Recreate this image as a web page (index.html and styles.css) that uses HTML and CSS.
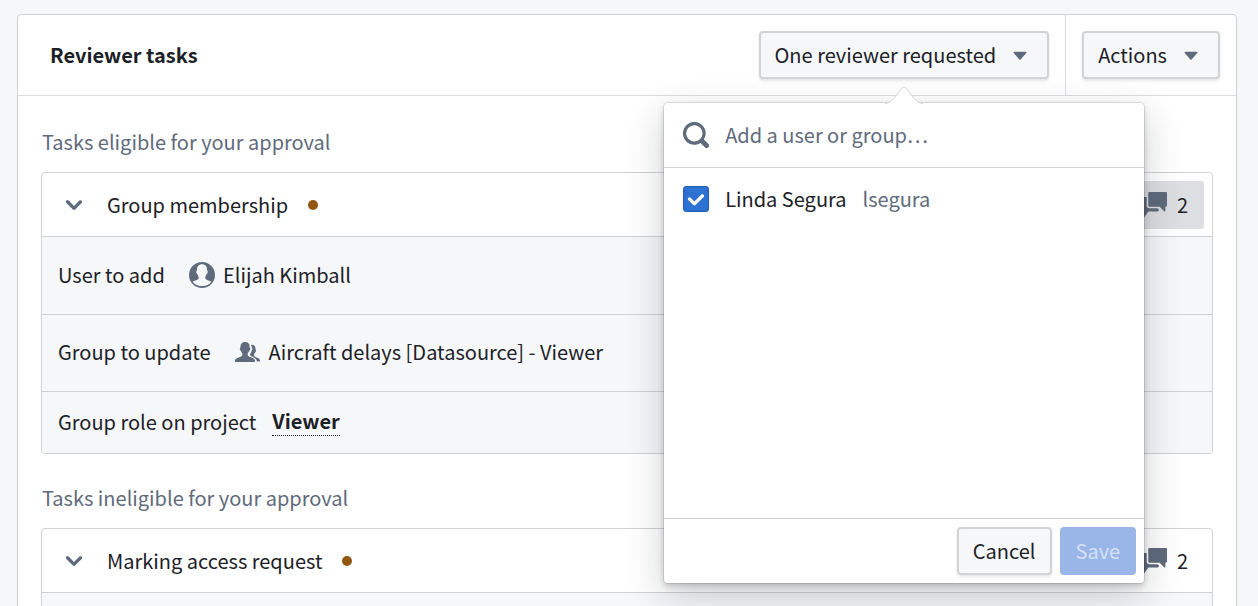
FILE: index.html
```html
<!DOCTYPE html>
<html lang="en">
<head>
<meta charset="utf-8">
<title>Reviewer tasks</title>
<link rel="stylesheet" href="styles.css">
</head>
<body>
<svg class="sprite" aria-hidden="true">
  <symbol id="chevron" viewBox="0 0 16 16"><path d="M12 5c-.28 0-.53.11-.71.29L8 8.59l-3.29-3.3a1.003 1.003 0 00-1.42 1.42l4 4c.18.18.43.29.71.29s.53-.11.71-.29l4-4A1.003 1.003 0 0012 5z"/></symbol>
  <symbol id="caret" viewBox="0 0 16 16"><path d="M12 6.500c0-.28-.22-.5-.5-.5h-7a.495.495 0 00-.37.83l3.500 4c.09.1.22.17.37.17s.28-.07.37-.17l3.500-4c.08-.09.13-.2.13-.33z"/></symbol>
  <symbol id="chat" viewBox="0 0 16 16"><path d="M5.200 0H15.300c.4 0 .7.3.7.7v7.600c0 .4-.3.7-.7.7H15v2.500c0 .5-.5.6-.8.300L11.500 9H5.200c-.4 0-.7-.3-.7-.7V.7c0-.4.3-.7.7-.7z"/><path d="M3.500 3v5.500C3.500 9.400 4.100 10 5 10h5.200l.8.800v.500c0 .4-.3.7-.7.7H4.500l-2.700 3.800c-.3.300-.8.200-.8-.300V12H.7c-.4 0-.7-.3-.7-.7V3.700C0 3.300.3 3 .7 3z"/></symbol>
</svg>
<main class="card">
  <header class="card-header">
    <h1 class="card-title">Reviewer tasks</h1>
    <div class="header-group reviewer-picker">
      <button class="button" type="button" aria-expanded="true">One reviewer requested <svg class="icon"><use href="#caret"/></svg></button>
      <section class="popover" aria-label="Reviewers">
        <svg class="popover-arrow" viewBox="0 0 38 18"><path class="arrow-fill" d="M0 18C5 17 8 14 11 10L16 3Q19 -1 22 3L27 10C30 14 33 17 38 18z"/><path class="arrow-line" d="M0 17.500C5 17 8 14 11 10L16 3Q19 -1 22 3L27 10C30 14 33 17 38 17.500"/></svg>
        <div class="search">
          <svg class="icon" viewBox="0 0 16 16"><path d="M15.550 13.430l-2.670-2.680a6.940 6.940 0 001.110-3.760c0-3.870-3.130-7-7-7s-7 3.130-7 7 3.130 7 7 7c1.390 0 2.680-.42 3.760-1.110l2.680 2.670a1.498 1.498 0 102.120-2.120zm-8.560-1.440c-2.760 0-5-2.240-5-5s2.240-5 5-5 5 2.240 5 5-2.240 5-5 5z"/></svg>
          <input class="search-input" type="text" placeholder="Add a user or group…" aria-label="Add a user or group">
        </div>
        <div class="options">
          <label class="option">
            <span class="check"><input class="check-input" type="checkbox" checked><svg class="check-tick" viewBox="0 0 16 16"><path d="M12 5c-.28 0-.53.11-.71.29L7 9.590l-2.290-2.300a1.003 1.003 0 00-1.420 1.420l3 3c.18.18.43.29.71.29s.53-.11.71-.29l5-5A1.003 1.003 0 0012 5z"/></svg></span>
            <span>Linda Segura</span>
            <span class="muted">lsegura</span>
          </label>
        </div>
        <footer class="popover-footer">
          <button class="button" type="button">Cancel</button>
          <button class="button primary" type="button" disabled>Save</button>
        </footer>
      </section>
    </div>
    <div class="header-group actions">
      <button class="button" type="button">Actions <svg class="icon"><use href="#caret"/></svg></button>
    </div>
  </header>
  <div class="card-body">
    <section class="task-group">
      <h2 class="group-title">Tasks eligible for your approval</h2>
      <article class="task">
        <div class="task-header">
          <button class="toggle" type="button" aria-expanded="true"><svg class="icon"><use href="#chevron"/></svg> Group membership <span class="dot"></span></button>
          <button class="comments active" type="button" aria-label="2 comments"><svg class="icon"><use href="#chat"/></svg>2</button>
        </div>
        <div class="detail tall">
          <span>User to add</span>
          <span class="value"><svg class="icon" viewBox="0 0 26 26"><path fill-rule="evenodd" d="M13 0a13 13 0 110 26 13 13 0 010-26zM13 2.300c-3.200 0-5 2.200-5 5.200 0 1-.9 1.500-.8 2.500.1 1.200.9 1.400 1.200 2.300.4 1.300 1.100 1.900 1.300 2.700.2 1.800-.5 2.400-1.900 3-1.500.6-3 1-4.100 1.700A10.800 10.800 0 0013 24a10.800 10.800 0 009.300-4.300c-1.100-.7-2.600-1.100-4.100-1.700-1.400-.6-2.100-1.200-1.900-3 .2-.8.900-1.400 1.300-2.700.3-.9 1.100-1.100 1.200-2.300.1-1-.8-1.500-.8-2.500 0-3-1.800-5.200-5-5.200z"/></svg> Elijah Kimball</span>
        </div>
        <div class="detail medium">
          <span>Group to update</span>
          <span class="value"><svg class="icon" viewBox="0 0 26 26"><path d="M10.300 3C7.200 3 5.300 5 5.500 8c0 1-.9 1-.7 2.200.1.900.9 1 1.100 1.800.3 1 .9 1.500 1.400 2.200.4 2.200-.3 3-1.700 3.600C3.300 18.800 0 19.400 0 22v1h20v-1c0-2.600-3.300-3.200-5.600-4.200-1.300-.6-2-1.400-1.700-3.600.6-.7 1.200-1.200 1.500-2.200.2-.8 1-.9 1.100-1.800.2-1.200-.7-1.200-.7-2.200.2-3-1.200-5-4.300-5z"/><path d="M15.700 5.900c3.200-.5 5 1.300 4.800 4.100 0 .8.700 1 .5 1.900-.1.700-.7.900-.9 1.600-.3.900-.7 1.200-1 1.700-.3 1.600.2 2.200 1.400 2.800 2.200 1.100 4.500 1.400 4.500 3.500v1h-3c-.4-2.500-2.700-3.900-5-4.900-1.600-.7-2.300-1.500-1.900-2.800.9-.7 1.300-2 1.500-3 1.100-1.200 1-2 .2-3.300.1-1-.4-1.900-1.100-2.600z"/></svg> Aircraft delays [Datasource] - Viewer</span>
        </div>
        <div class="detail">
          <span>Group role on project</span>
          <span class="role">Viewer</span>
        </div>
      </article>
    </section>
    <section class="task-group">
      <h2 class="group-title">Tasks ineligible for your approval</h2>
      <article class="task">
        <div class="task-header">
          <button class="toggle" type="button" aria-expanded="true"><svg class="icon"><use href="#chevron"/></svg> Marking access request <span class="dot"></span></button>
          <button class="comments" type="button" aria-label="2 comments"><svg class="icon"><use href="#chat"/></svg>2</button>
        </div>
        <div class="detail tall"></div>
      </article>
    </section>
  </div>
</main>
</body>
</html>
```
FILE: styles.css
```css
* { box-sizing: border-box; }

body {
  margin: 0;
  padding: 14px 21px 0 17px;
  height: 100vh;
  overflow: hidden;
  background: #f6f7f9;
  color: #1c2127;
  font: 20px/28px "Noto Sans CJK SC", "Noto Sans", sans-serif;
}

button, input { font: inherit; color: inherit; }

.sprite { display: none; }

.icon {
  flex: none;
  width: 26px;
  height: 26px;
  fill: #5f6b7c;
}

.card {
  border: 1px solid #d0d1d4;
  border-radius: 4px;
  background: #fff;
}

.card-header {
  display: flex;
  align-items: stretch;
  border-bottom: 1px solid #dcdde0;
}

.card-title {
  flex: 1;
  align-self: center;
  margin: 0;
  padding-left: 32px;
  font-size: 20px;
  font-weight: 700;
}

.header-group { padding: 16px; }
.reviewer-picker { position: relative; }
.actions { border-left: 1px solid #dcdde0; }

.button {
  display: flex;
  align-items: center;
  gap: 11px;
  height: 48px;
  padding: 0 14px;
  border: 2px solid #d1d3d5;
  border-radius: 4px;
  background: #f6f7f9;
  box-shadow: 0 2px 3px rgba(17, 20, 24, 0.1);
}

.primary {
  border-color: #9ab6e8;
  background: #9ab6e8;
  color: #d6e1f6;
  box-shadow: none;
}

.card-body { padding: 32px 23px; }
.task-group { margin-bottom: 30px; }

.group-title {
  margin: 0 0 16px;
  padding-left: 1px;
  color: #5f6b7c;
  font-size: 20px;
  font-weight: 400;
}

.task {
  border: 1px solid #d0d1d4;
  border-radius: 4px;
  overflow: hidden;
}

.task-header {
  display: flex;
  justify-content: space-between;
  padding: 8px 8px 7px;
}

.toggle, .comments {
  display: flex;
  align-items: center;
  height: 48px;
  border: 0;
  border-radius: 3px;
  background: none;
}

.toggle { gap: 20px; padding: 0 11px; }
.comments { gap: 10px; padding: 0 16px; }
.active { background: #dddee2; }

.dot {
  width: 10px;
  height: 10px;
  border-radius: 50%;
  background: #935610;
}

.detail {
  display: flex;
  align-items: center;
  gap: 16px;
  min-height: 62px;
  padding: 0 16px 2px;
  border-top: 1px solid #d0d1d4;
  background: #f6f7f9;
}

.tall { min-height: 78px; gap: 24px; }
.medium { min-height: 77px; gap: 24px; }

.value { display: flex; align-items: center; gap: 8px; }

.role {
  border-bottom: 1px dotted #1c2127;
  font-weight: 700;
}

.popover {
  position: absolute;
  top: 88px;
  right: -79px;
  z-index: 1;
  width: 480px;
  border-radius: 4px;
  background: #fff;
  box-shadow: 0 0 0 1px rgba(17, 20, 24, 0.1), 0 3px 6px rgba(17, 20, 24, 0.2), 0 13px 39px rgba(17, 20, 24, 0.2);
}

.popover-arrow {
  position: absolute;
  top: -17px;
  left: 50%;
  width: 38px;
  height: 18px;
  margin-left: -19px;
}

.arrow-fill { fill: #fff; }
.arrow-line { fill: none; stroke: #d3d5d8; }

.search {
  display: flex;
  align-items: center;
  gap: 16px;
  height: 65px;
  padding: 0 19px;
  border-bottom: 1px solid #d0d1d4;
}

.search-input {
  flex: 1;
  min-width: 0;
  padding: 0;
  border: 0;
  outline: 0;
  background: none;
}

.search-input::placeholder { color: #5f6b7c; opacity: 1; }

.options { height: 350px; padding: 17px 19px; }
.option { display: flex; align-items: center; gap: 16px; }

.check { display: grid; }

.check-input, .check-tick {
  grid-area: 1 / 1;
  width: 26px;
  height: 26px;
  margin: 0;
}

.check-input {
  appearance: none;
  border: 1px solid #215db0;
  border-radius: 3px;
  background: #2d72d2;
}

.check-tick { fill: #fff; pointer-events: none; }

.muted { color: #5f6b7c; }

.popover-footer {
  display: flex;
  justify-content: flex-end;
  gap: 8px;
  padding: 8px;
  border-top: 1px solid #d0d1d4;
}
```
